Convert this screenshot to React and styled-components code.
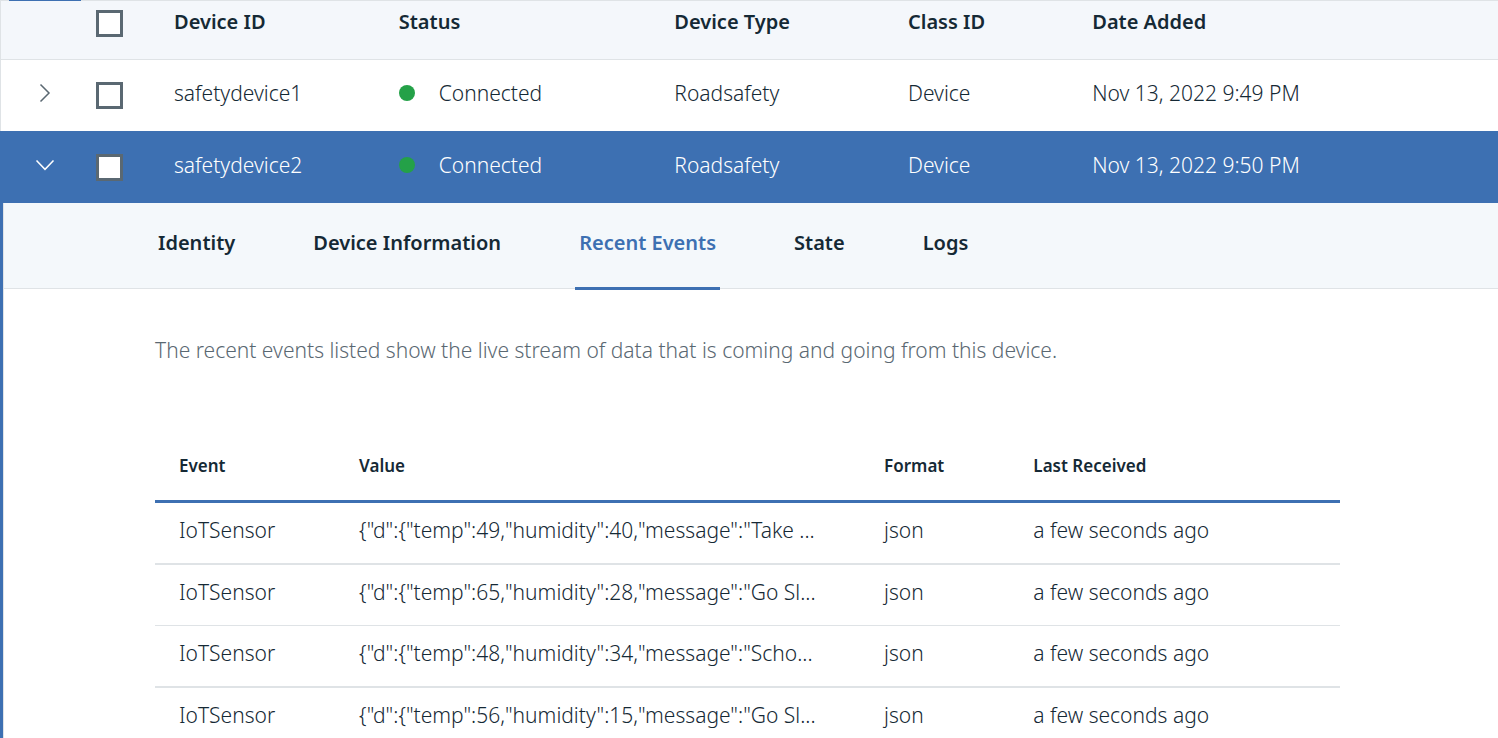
import React, { useState } from 'react';
import styled, { createGlobalStyle } from 'styled-components';

const blue = '#3d70b2';
const ink = '#152935';
const slate = '#5a6872';
const line = '#dfe3e6';
const haze = '#f4f7fb';

const GlobalStyle = createGlobalStyle`
  *, *::before, *::after { box-sizing: border-box; }
  body {
    margin: 0;
    background: #fff;
    color: ${ink};
    font-family: "Noto Sans", "Open Sans", sans-serif;
    font-size: 21px;
    font-weight: 300;
    line-height: 24px;
  }
`;

const Page = styled.main`
  position: relative;
  height: 100vh;
  overflow: hidden;

  &::before {
    content: '';
    position: absolute;
    top: 0;
    left: 9px;
    width: 72px;
    height: 1px;
    background: ${blue};
  }
`;

const DeviceTable = styled.table`
  width: 100%;
  table-layout: fixed;
  border-collapse: separate;
  border-spacing: 0;
`;

const Column = styled.col`
  width: ${(p) => p.$width};
`;

const HeadCell = styled.th`
  height: 59px;
  padding: 9px 0 0;
  border-top: 1px solid ${line};
  background: ${haze};
  font-size: 20px;
  font-weight: 600;
  text-align: left;
  vertical-align: top;

  &:first-child { border-left: 1px solid ${line}; }
`;

const DeviceCell = styled.td`
  height: 72px;
  padding: ${(p) => (p.$control ? 22 : 21)}px 0 0;
  border-top: 1px solid ${(p) => (p.$open ? blue : line)};
  background: ${(p) => (p.$open ? blue : '#fff')};
  color: ${(p) => (p.$open ? '#fff' : 'inherit')};
  vertical-align: top;

  &:first-child {
    padding-left: 33px;
    border-left: 1px solid ${(p) => (p.$open ? blue : line)};
  }
`;

const ExpandButton = styled.button`
  display: block;
  width: 22px;
  height: 22px;
  padding: 0;
  border: 0;
  background: none;
  color: ${(p) => (p.$open ? '#fff' : slate)};
  cursor: pointer;
`;

const Checkbox = styled.input.attrs({ type: 'checkbox' })`
  appearance: none;
  display: block;
  width: 27px;
  height: 27px;
  margin: 0;
  border: 3px solid ${slate};
  background: #fff;

  &:checked { background: ${blue}; }
`;

const Status = styled.div`
  display: flex;
  align-items: center;
  gap: 24px;
`;

const Dot = styled.span`
  width: 16px;
  height: 16px;
  border-radius: 50%;
  background: #24a148;
`;

const DetailCell = styled.td`
  padding: 0;
  border-left: 3px solid ${blue};
`;

const Detail = styled.section`
  border-left: 1px solid ${line};
`;

const TabBar = styled.div`
  display: flex;
  gap: 70px;
  height: 86px;
  padding-left: 150px;
  border-bottom: 1px solid ${line};
  background: #f4f8fb;
`;

const Tab = styled.button`
  height: 87px;
  padding: 28px 4px 32px;
  border: 0;
  border-bottom: 3px solid ${(p) => (p.$active ? blue : 'transparent')};
  background: none;
  color: ${(p) => (p.$active ? blue : ink)};
  font: inherit;
  font-size: 20px;
  font-weight: 600;
  line-height: 24px;
  white-space: nowrap;
  cursor: pointer;
`;

const Panel = styled.div`
  padding: 49px 158px 0 151px;
`;

const Intro = styled.p`
  margin: 0 0 73px;
  color: ${slate};
`;

const EventTable = styled.table`
  width: 100%;
  table-layout: fixed;
  border-collapse: separate;
  border-spacing: 0;
`;

const EventHead = styled.th`
  height: 68px;
  padding: 19px 24px 0;
  border-bottom: 3px solid ${blue};
  font-size: 17px;
  font-weight: 600;
  text-align: left;
  vertical-align: top;
`;

const EventCell = styled.td`
  height: 62px;
  padding: 15px 24px 0;
  border-bottom: 2px solid ${line};
  vertical-align: top;
  white-space: nowrap;

  tr:nth-child(even) > & {
    height: 61px;
    border-bottom-width: 1px;
  }
`;

const Chevron = ({ open }) => (
  <svg width="22" height="22" viewBox="0 0 22 22" fill="none" stroke="currentColor" strokeWidth="1.5" aria-hidden="true">
    <path d={open ? 'M2.5 6.5 11 15.3 19.5 6.5' : 'M6.5 2.5 15 11 6.5 19.5'} />
  </svg>
);

const devices = [
  { id: 'safetydevice1', added: 'Nov 13, 2022 9:49 PM' },
  { id: 'safetydevice2', added: 'Nov 13, 2022 9:50 PM' },
];

const tabs = ['Identity', 'Device Information', 'Recent Events', 'State', 'Logs'];

const events = [
  '{"d":{"temp":49,"humidity":40,"message":"Take ...',
  '{"d":{"temp":65,"humidity":28,"message":"Go Sl...',
  '{"d":{"temp":48,"humidity":34,"message":"Scho...',
  '{"d":{"temp":56,"humidity":15,"message":"Go Sl...',
];

function DeviceDetail() {
  const [active, setActive] = useState('Recent Events');
  return (
    <Detail>
      <TabBar role="tablist">
        {tabs.map((tab) => (
          <Tab key={tab} type="button" role="tab" aria-selected={tab === active} $active={tab === active} onClick={() => setActive(tab)}>
            {tab}
          </Tab>
        ))}
      </TabBar>
      <Panel role="tabpanel">
        <Intro>The recent events listed show the live stream of data that is coming and going from this device.</Intro>
        <EventTable>
          <colgroup>
            <Column $width="15.2%" />
            <Column $width="44.3%" />
            <Column $width="12.6%" />
            <Column />
          </colgroup>
          <thead>
            <tr>
              <EventHead scope="col">Event</EventHead>
              <EventHead scope="col">Value</EventHead>
              <EventHead scope="col">Format</EventHead>
              <EventHead scope="col">Last Received</EventHead>
            </tr>
          </thead>
          <tbody>
            {events.map((value) => (
              <tr key={value}>
                <EventCell>IoTSensor</EventCell>
                <EventCell>{value}</EventCell>
                <EventCell>json</EventCell>
                <EventCell>a few seconds ago</EventCell>
              </tr>
            ))}
          </tbody>
        </EventTable>
      </Panel>
    </Detail>
  );
}

export default function App() {
  const [openId, setOpenId] = useState('safetydevice2');
  return (
    <>
      <GlobalStyle />
      <Page>
        <DeviceTable>
          <colgroup>
            <Column $width="96px" />
            <Column $width="78px" />
            <Column $width="15%" />
            <Column $width="18.4%" />
            <Column $width="15.6%" />
            <Column $width="12.3%" />
            <Column />
          </colgroup>
          <thead>
            <tr>
              <HeadCell />
              <HeadCell><Checkbox aria-label="Select all devices" /></HeadCell>
              <HeadCell scope="col">Device ID</HeadCell>
              <HeadCell scope="col">Status</HeadCell>
              <HeadCell scope="col">Device Type</HeadCell>
              <HeadCell scope="col">Class ID</HeadCell>
              <HeadCell scope="col">Date Added</HeadCell>
            </tr>
          </thead>
          <tbody>
            {devices.map(({ id, added }) => {
              const open = id === openId;
              return (
                <React.Fragment key={id}>
                  <tr>
                    <DeviceCell $open={open} $control>
                      <ExpandButton type="button" $open={open} aria-expanded={open} aria-label={`Details of ${id}`} onClick={() => setOpenId(open ? null : id)}>
                        <Chevron open={open} />
                      </ExpandButton>
                    </DeviceCell>
                    <DeviceCell $open={open} $control><Checkbox aria-label={`Select ${id}`} /></DeviceCell>
                    <DeviceCell $open={open}>{id}</DeviceCell>
                    <DeviceCell $open={open}><Status><Dot />Connected</Status></DeviceCell>
                    <DeviceCell $open={open}>Roadsafety</DeviceCell>
                    <DeviceCell $open={open}>Device</DeviceCell>
                    <DeviceCell $open={open}>{added}</DeviceCell>
                  </tr>
                  {open && (
                    <tr>
                      <DetailCell colSpan={7}><DeviceDetail /></DetailCell>
                    </tr>
                  )}
                </React.Fragment>
              );
            })}
          </tbody>
        </DeviceTable>
      </Page>
    </>
  );
}
